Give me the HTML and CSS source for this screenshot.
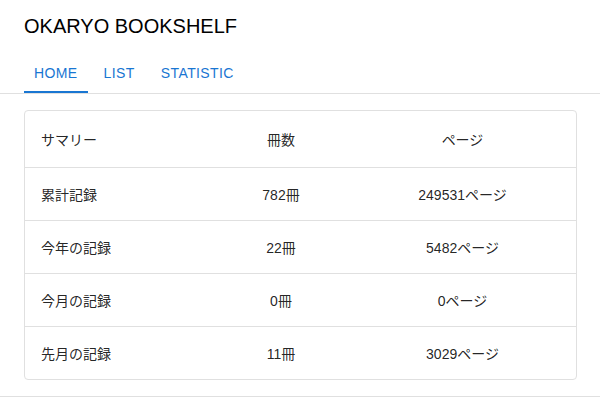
FILE: index.html
```html
<!DOCTYPE html>
<html lang="ja">
<head>
<meta charset="utf-8">
<link rel="stylesheet" href="styles.css">
</head>
<body>
<header class="top">
  <h1 class="title">OKARYO BOOKSHELF</h1>
  <nav class="tabs">
    <span class="tab active">HOME</span>
    <span class="tab">LIST</span>
    <span class="tab">STATISTIC</span>
  </nav>
</header>
<main class="content">
  <div class="card">
    <div class="row head">
      <div class="c1">サマリー</div><div class="c2">冊数</div><div class="c3">ページ</div>
    </div>
    <div class="row">
      <div class="c1">累計記録</div><div class="c2">782冊</div><div class="c3">249531ページ</div>
    </div>
    <div class="row">
      <div class="c1">今年の記録</div><div class="c2">22冊</div><div class="c3">5482ページ</div>
    </div>
    <div class="row">
      <div class="c1">今月の記録</div><div class="c2">0冊</div><div class="c3">0ページ</div>
    </div>
    <div class="row">
      <div class="c1">先月の記録</div><div class="c2">11冊</div><div class="c3">3029ページ</div>
    </div>
  </div>
</main>
<div class="footer-line"></div>
</body>
</html>
```
FILE: styles.css
```css
html, body {
  margin: 0;
  padding: 0;
  background: #fff;
  font-family: "Liberation Sans", Arial, "Noto Sans CJK JP", sans-serif;
  color: rgba(0,0,0,0.87);
}
.top {
  border-bottom: 1px solid #e0e0e0;
}
.title {
  margin: 0;
  padding: 12px 24px 0 24px;
  height: 33px;
  font-size: 20px;
  font-weight: 400;
  line-height: 28px;
  color: #000;
}
.tabs {
  display: flex;
  padding: 0 24px;
  height: 48px;
}
.tab {
  display: flex;
  align-items: center;
  padding: 9px 10px 0 10px;
  font-size: 14px;
  letter-spacing: 0.4px;
  color: #1976d2;
  box-sizing: border-box;
  border-bottom: 2px solid transparent;
  margin-right: 6px;
}
.tab.active {
  border-bottom-color: #1976d2;
}
.content {
  padding: 16px 23px 16px 24px;
}
.card {
  border: 1px solid #e0e0e0;
  border-radius: 4px;
}
.row {
  display: grid;
  grid-template-columns: 188px 136px 1fr;
  height: 52px;
  align-items: center;
  font-size: 14px;
  border-top: 1px solid #e0e0e0;
}
.row.head {
  height: 56px;
  border-top: none;
}
.c1 {
  padding-left: 16px;
}
.c2, .c3 {
  text-align: center;
}
.footer-line {
  border-top: 1px solid #e0e0e0;
}
```
